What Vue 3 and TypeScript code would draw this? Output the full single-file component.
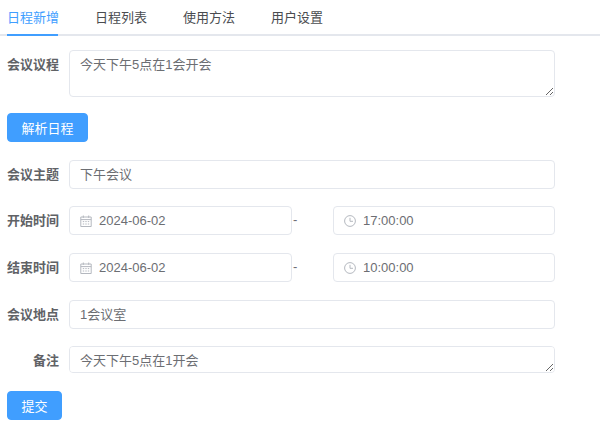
<script setup lang="ts">
const tabs: string[] = ['日程新增', '日程列表', '使用方法', '用户设置']
const agenda = '今天下午5点在1会开会'
const note = '今天下午5点在1开会'
</script>

<template>
  <div class="page">
    <nav class="tabs">
      <span v-for="(t, i) in tabs" :key="t" class="tab" :class="{ active: i === 0 }">{{ t }}</span>
    </nav>
    <form class="form">
      <div class="row r-agenda">
        <label class="lbl">会议议程</label>
        <textarea class="area big" :value="agenda"></textarea>
      </div>
      <button type="button" class="btn parse">解析日程</button>
      <div class="row r-title">
        <label class="lbl">会议主题</label>
        <div class="box full">下午会议</div>
      </div>
      <div class="row r-start">
        <label class="lbl">开始时间</label>
        <div class="box date">
          <svg class="ico" viewBox="0 0 12 12"><path d="M.8 2h10.4v9.5H.8zM.8 4.6h10.4M3.3.5v2.4M8.7.5v2.4M2.8 6.6h1.4M5.3 6.6h1.4M7.8 6.6h1.4M2.8 9h1.4M5.3 9h1.4M7.8 9h1.4"/></svg>
          2024-06-02
        </div>
        <span class="dash">-</span>
        <div class="box time">
          <svg class="ico" viewBox="0 0 12 12"><circle cx="6" cy="6" r="5.4"/><path d="M6 2.8v3.5h3"/></svg>
          17:00:00
        </div>
      </div>
      <div class="row r-time">
        <label class="lbl">结束时间</label>
        <div class="box date">
          <svg class="ico" viewBox="0 0 12 12"><path d="M.8 2h10.4v9.5H.8zM.8 4.6h10.4M3.3.5v2.4M8.7.5v2.4M2.8 6.6h1.4M5.3 6.6h1.4M7.8 6.6h1.4M2.8 9h1.4M5.3 9h1.4M7.8 9h1.4"/></svg>
          2024-06-02
        </div>
        <span class="dash">-</span>
        <div class="box time">
          <svg class="ico" viewBox="0 0 12 12"><circle cx="6" cy="6" r="5.4"/><path d="M6 2.8v3.5h3"/></svg>
          10:00:00
        </div>
      </div>
      <div class="row r-place">
        <label class="lbl">会议地点</label>
        <div class="box full">1会议室</div>
      </div>
      <div class="row r-note">
        <label class="lbl">备注</label>
        <textarea class="area small" :value="note"></textarea>
      </div>
      <button type="button" class="btn submit">提交</button>
    </form>
  </div>
</template>

<style>
html, body { margin: 0; background: #fff; }
</style>

<style scoped>
.page {
  width: 600px;
  height: 434px;
  overflow: hidden;
  font-family: "Liberation Sans", "Noto Sans CJK SC", sans-serif;
  color: #6c6e73;
  font-size: 13px;
  box-sizing: border-box;
}
.tabs {
  display: flex;
  gap: 37px;
  padding-left: 7px;
  height: 36px;
  box-sizing: border-box;
  border-bottom: 2px solid #e4e7ed;
}
.tab {
  line-height: 36px;
  height: 36px;
  color: #4a4c50;
  width: 51px;
  white-space: nowrap;
  box-sizing: border-box;
}
.tab.active {
  color: #409eff;
  border-bottom: 2px solid #409eff;
}
.form {
  display: flex;
  flex-direction: column;
  align-items: flex-start;
  padding: 14px 0 0 7px;
}
.row {
  display: flex;
  align-items: flex-start;
}
.lbl {
  width: 52px;
  margin-right: 10px;
  text-align: right;
  font-weight: 700;
  line-height: 29px;
  color: #606266;
  flex: none;
}
.box {
  height: 29px;
  border: 1px solid #e4e7ed;
  border-radius: 4px;
  box-sizing: border-box;
  line-height: 27px;
  padding-left: 10px;
  display: flex;
  align-items: center;
  background: #fff;
}
.full { width: 486px; }
.date { width: 223px; }
.time { width: 222px; }
.ico {
  width: 12px;
  height: 12px;
  margin-right: 7px;
  fill: none;
  stroke: #b4b8bf;
  stroke-width: 1;
  flex: none;
}
.dash {
  width: 41px;
  flex: none;
  line-height: 28px;
  padding-left: 1px;
  box-sizing: border-box;
}
.area {
  display: block;
  width: 486px;
  border: 1px solid #e4e7ed;
  border-radius: 4px;
  box-sizing: border-box;
  padding: 5px 10px;
  margin: 0;
  font: inherit;
  color: #6c6e73;
  line-height: 17px;
  outline: none;
  resize: vertical;
}
.area.big { height: 47px; }
.area.small { height: 27px; }
.btn {
  display: block;
  height: 29px;
  border: 1px solid #409eff;
  background: #409eff;
  color: #fff;
  border-radius: 4px;
  font: inherit;
  padding: 0;
  margin: 0;
}
.parse { width: 81px; margin-top: 16px; }
.submit { width: 55px; margin-top: 16px; }
.r-title { margin-top: 18px; }
.r-start { margin-top: 17px; }
.r-time { margin-top: 18px; }
.r-place { margin-top: 18px; }
.r-note { margin-top: 17px; }
</style>
